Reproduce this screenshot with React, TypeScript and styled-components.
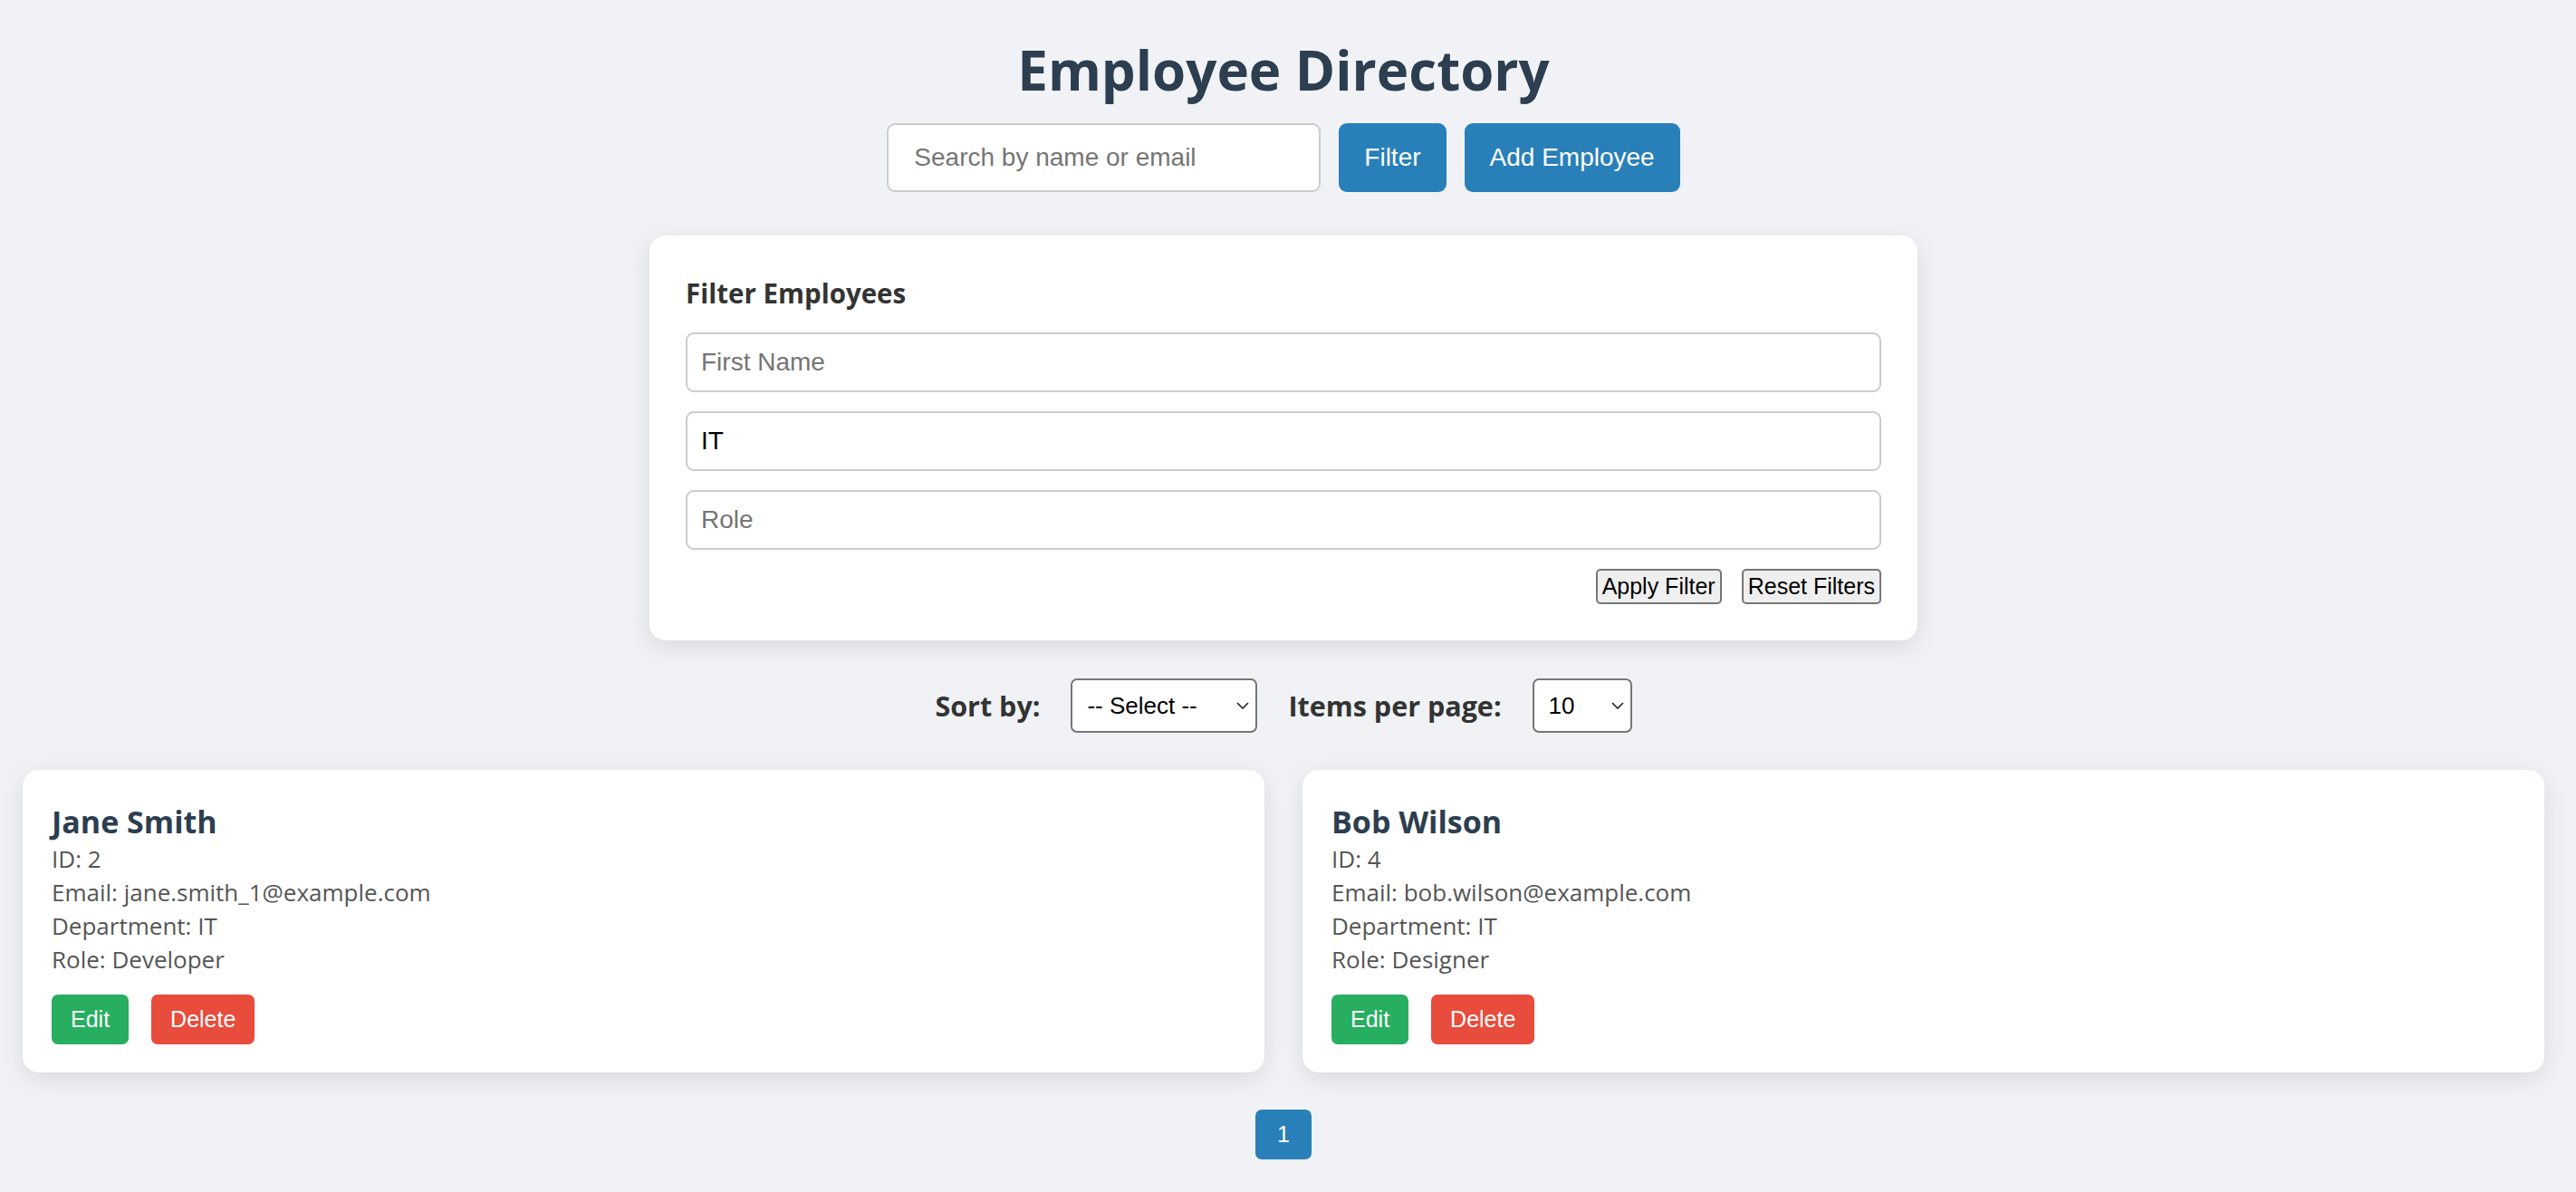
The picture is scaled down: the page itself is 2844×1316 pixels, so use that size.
import styled, { createGlobalStyle } from 'styled-components'

type Employee = {
  id: number,
  name: string,
  email: string,
  department: string,
  role: string,
}

const employees: Array<Employee> = [
  { id: 2, name: 'Jane Smith', email: 'jane.smith_1@example.com', department: 'IT', role: 'Developer' },
  { id: 4, name: 'Bob Wilson', email: 'bob.wilson@example.com', department: 'IT', role: 'Designer' },
]

const GlobalStyle = createGlobalStyle`
  body {
    margin: 0;
    background: #f0f2f5;
    font-family: "Open Sans", "Noto Sans", sans-serif;
  }
`

const Dropdown = ({ width, value, options }: { width: number, value: string, options: Array<[string, string]> }) => {
  return (
    <SelectWrap $width={width}>
      <Select defaultValue={value}>
        {options.map(([v, label]) => (
          <option key={v} value={v}>{label}</option>
        ))}
      </Select>
      <Chevron width="14" height="8" viewBox="0 0 14 8">
        <polyline points="1,1 7,7 13,1" fill="none" stroke="#222" strokeWidth="1.6" />
      </Chevron>
    </SelectWrap>
  )
}

const EmployeeCard = ({ employee }: { employee: Employee }) => {
  return (
    <Card>
      <Name>{employee.name}</Name>
      <Info>ID: {employee.id}</Info>
      <Info>Email: {employee.email}</Info>
      <Info>Department: {employee.department}</Info>
      <Info>Role: {employee.role}</Info>
      <CardActions>
        <ActionButton $tone="edit">Edit</ActionButton>
        <ActionButton $tone="delete">Delete</ActionButton>
      </CardActions>
    </Card>
  )
}

export default function App() {
  return (
    <Page>
      <GlobalStyle />
      <Title>Employee Directory</Title>

      <SearchRow>
        <SearchInput placeholder="Search by name or email" />
        <PrimaryButton>Filter</PrimaryButton>
        <PrimaryButton>Add Employee</PrimaryButton>
      </SearchRow>

      <FilterPanel>
        <PanelTitle>Filter Employees</PanelTitle>
        <FilterInput placeholder="First Name" />
        <FilterInput defaultValue="IT" />
        <FilterInput placeholder="Role" />
        <PanelActions>
          <PlainButton>Apply Filter</PlainButton>
          <PlainButton>Reset Filters</PlainButton>
        </PanelActions>
      </FilterPanel>

      <SortRow>
        <SortLabel>Sort by:</SortLabel>
        <Dropdown
          width={206}
          value=""
          options={[['', '-- Select --'], ['firstName', 'First Name'], ['department', 'Department']]}
        />
        <SortLabel>Items per page:</SortLabel>
        <Dropdown
          width={110}
          value="10"
          options={[['10', '10'], ['25', '25'], ['50', '50']]}
        />
      </SortRow>

      <CardGrid>
        {employees.map((employee) => (
          <EmployeeCard key={employee.id} employee={employee} />
        ))}
      </CardGrid>

      <Pagination>
        <PageButton>1</PageButton>
      </Pagination>
    </Page>
  )
}

const Page = styled.div`
  padding: 37px 35px 40px 25px;
`

const Title = styled.h1`
  margin: 0;
  font-size: 60px;
  line-height: 80px;
  font-weight: 700;
  color: #2c3e50;
  text-align: center;
`

const SearchRow = styled.div`
  display: flex;
  justify-content: center;
  gap: 20px;
  margin-top: 19px;
`

const SearchInput = styled.input`
  box-sizing: border-box;
  width: 479px;
  height: 76px;
  padding: 0 28px;
  border: 2px solid #ccc;
  border-radius: 9px;
  font-family: "Liberation Sans", Arial, sans-serif;
  font-size: 28px;
  &::placeholder {
    color: #757575;
  }
`

const PrimaryButton = styled.button`
  height: 76px;
  padding: 0 28px;
  border: none;
  border-radius: 9px;
  background: #2980b9;
  color: #fff;
  font-family: "Liberation Sans", Arial, sans-serif;
  font-size: 28px;
`

const FilterPanel = styled.div`
  box-sizing: border-box;
  width: 1400px;
  margin: 48px auto 0;
  padding: 44px 40px 40px;
  background: #fff;
  border-radius: 18px;
  box-shadow: 0 7px 27px rgba(0, 0, 0, 0.1);
  display: flex;
  flex-direction: column;
`

const PanelTitle = styled.h3`
  margin: 0 0 23px;
  font-size: 29.5px;
  line-height: 40px;
  font-weight: 700;
  color: #333;
`

const FilterInput = styled.input`
  box-sizing: border-box;
  width: 100%;
  height: 66px;
  margin-bottom: 21px;
  padding: 0 15px;
  border: 2px solid #ccc;
  border-radius: 9px;
  font-family: "Liberation Sans", Arial, sans-serif;
  font-size: 28px;
  color: #000;
  &::placeholder {
    color: #757575;
  }
`

const PanelActions = styled.div`
  display: flex;
  justify-content: flex-end;
  gap: 22px;
`

const PlainButton = styled.button`
  height: 39px;
  padding: 0 5px;
  border: 2px solid #767676;
  border-radius: 5px;
  background: #efefef;
  color: #000;
  font-family: "Liberation Sans", Arial, sans-serif;
  font-size: 25px;
`

const SortRow = styled.div`
  display: flex;
  justify-content: center;
  align-items: center;
  gap: 34px;
  margin-top: 42px;
`

const SortLabel = styled.label`
  font-size: 30.5px;
  font-weight: 700;
  color: #333;
`

const SelectWrap = styled.div<{ $width: number }>`
  position: relative;
  width: ${(p) => p.$width}px;
  height: 60px;
`

const Select = styled.select`
  box-sizing: border-box;
  width: 100%;
  height: 100%;
  padding: 0 30px 0 16px;
  border: 2px solid #767676;
  border-radius: 7px;
  background: #fff;
  color: #000;
  font-family: "Liberation Sans", Arial, sans-serif;
  font-size: 26px;
  appearance: none;
`

const Chevron = styled.svg`
  position: absolute;
  right: 9px;
  top: 26px;
  pointer-events: none;
`

const CardGrid = styled.div`
  display: grid;
  grid-template-columns: 1fr 1fr;
  gap: 42px;
  margin-top: 41px;
`

const Card = styled.div`
  padding: 34px 32px 31px;
  background: #fff;
  border-radius: 18px;
  box-shadow: 0 7px 27px rgba(0, 0, 0, 0.1);
`

const Name = styled.h3`
  margin: 0;
  font-size: 34px;
  line-height: 46px;
  font-weight: 700;
  color: #2c3e50;
`

const Info = styled.p`
  margin: 0;
  font-size: 26px;
  line-height: 37px;
  color: #555;
`

const CardActions = styled.div`
  display: flex;
  gap: 25px;
  margin-top: 20px;
`

const ActionButton = styled.button<{ $tone: 'edit' | 'delete' }>`
  height: 55px;
  padding: 0 21px;
  border: none;
  border-radius: 7px;
  background: ${(p) => (p.$tone === 'edit' ? '#27ae60' : '#e74c3c')};
  color: #fff;
  font-family: "Liberation Sans", Arial, sans-serif;
  font-size: 25px;
`

const Pagination = styled.div`
  display: flex;
  justify-content: center;
  margin-top: 41px;
`

const PageButton = styled.button`
  height: 55px;
  padding: 0 24px;
  border: none;
  border-radius: 7px;
  background: #2980b9;
  color: #fff;
  font-family: "Liberation Sans", Arial, sans-serif;
  font-size: 25px;
`
